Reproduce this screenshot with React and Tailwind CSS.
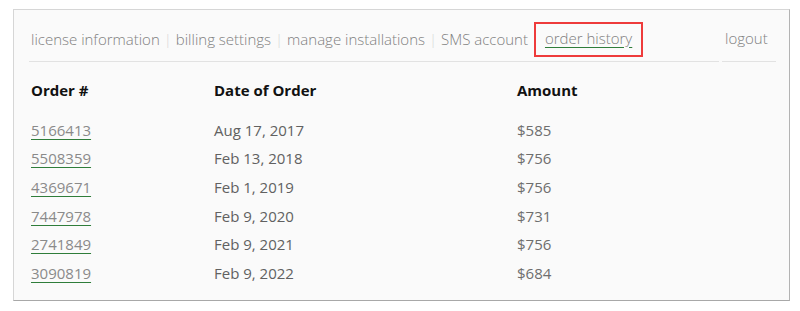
import React from 'react';

const orders = [
  { id: '5166413', date: 'Aug 17, 2017', amount: '$585' },
  { id: '5508359', date: 'Feb 13, 2018', amount: '$756' },
  { id: '4369671', date: 'Feb 1, 2019', amount: '$756' },
  { id: '7447978', date: 'Feb 9, 2020', amount: '$731' },
  { id: '2741849', date: 'Feb 9, 2021', amount: '$756' },
  { id: '3090819', date: 'Feb 9, 2022', amount: '$684' },
];

const navItems = ['license information', 'billing settings', 'manage installations', 'SMS account'];

const App = () => {
  return (
    <div className="min-h-screen bg-white pt-[9px] pl-[13px]" style={{ fontFamily: '"Open Sans", sans-serif' }}>
      <div className="w-[777px] border border-[#d6d6d6] border-r-[#b3b3b3] border-b-[#a8a8a8] bg-[#fafafa] pl-[15px] pr-[13px] pb-[12px]">
        {/* nav */}
        <div className="flex gap-[3px] text-[15px] leading-[21px] font-light text-[#808080]">
          <div className="flex-1 flex items-center pt-[12px] pb-[4px] pl-[2px] border-b border-[#e2e2e2]">
            {navItems.map((item, i) => (
              <React.Fragment key={item}>
                {i > 0 && <span className="w-[16px] text-center text-[#d8d8d8]">|</span>}
                <span>{item}</span>
              </React.Fragment>
            ))}
            <span className="ml-[6px] border-2 border-[#ee3b3b] h-[35px] px-[9px] pb-[2px] flex items-center">
              <a href="#" className="underline decoration-[#2f7d3a] underline-offset-[3px]">order history</a>
            </span>
          </div>
          <div className="w-[54px] flex items-center pt-[12px] pb-[6px] pl-[3px] border-b border-[#e2e2e2]">
            logout
          </div>
        </div>

        {/* table */}
        <div className="pl-[2px] text-[15px] leading-[21px]">
          <div className="grid grid-cols-[183px_303px_1fr] pt-[18px] pb-[15px] font-bold text-[#111]">
            <div>Order #</div>
            <div>Date of Order</div>
            <div>Amount</div>
          </div>
          {orders.map((o) => (
            <div key={o.id} className="grid grid-cols-[183px_303px_1fr] h-[28.6px] items-center">
              <div>
                <a href="#" className="text-[#8a8a8a] underline decoration-[#2f7d3a] underline-offset-[3px]">{o.id}</a>
              </div>
              <div className="text-[#616161]">{o.date}</div>
              <div className="text-[#6e6e6e]">{o.amount}</div>
            </div>
          ))}
        </div>
      </div>
    </div>
  );
};

export default App;
